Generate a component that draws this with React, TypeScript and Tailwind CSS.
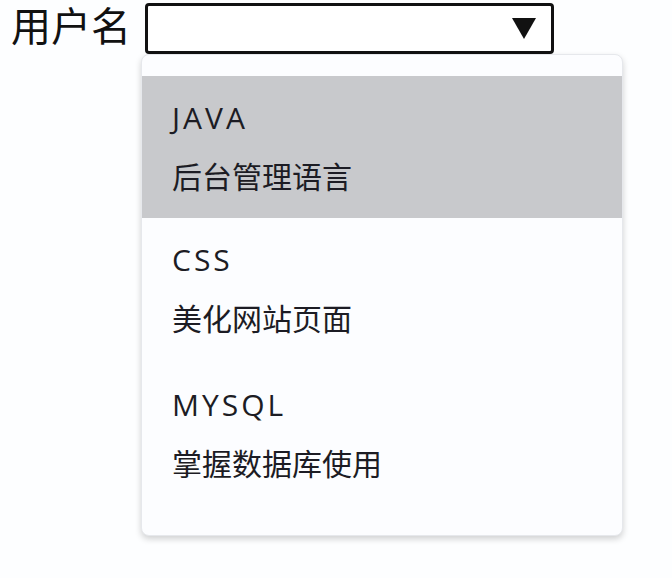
import { useState } from "react";

interface Option {
  title: string;
  desc: string;
}

const options: Option[] = [
  { title: "JAVA", desc: "后台管理语言" },
  { title: "CSS", desc: "美化网站页面" },
  { title: "MYSQL", desc: "掌握数据库使用" },
];

const font = { fontFamily: '"Open Sans", "Noto Sans CJK SC", sans-serif' };

export default function App() {
  const [active, setActive] = useState(0);

  return (
    <main className="min-h-[578px] w-[672px] bg-[#fdfeff] text-[#1c1c24]" style={font}>
      {/* 选择框 */}
      <div className="flex items-start pl-[11px]">
        <label className="w-[134px] shrink-0 text-[40px] leading-[52px] text-[#111]">用户名</label>
        <div className="mt-[3px] flex h-[51px] w-[409px] items-center justify-end rounded-[4px] border-[3px] border-[#111] bg-white pr-[15px]">
          <svg width="24" height="21" viewBox="0 0 24 21">
            <polygon points="0,0 24,0 12,21" fill="#111" />
          </svg>
        </div>
      </div>

      {/* 下拉列表 */}
      <ul className="ml-[141px] w-[482px] rounded-[8px] border border-[#e6e8ec] bg-[#fcfdff] pt-[21px] pb-[27px] shadow-[0_3px_6px_rgba(0,0,0,0.18)]">
        {options.map((opt, i) => (
          <li
            key={opt.title}
            onMouseEnter={() => setActive(i)}
            className={`h-[145px] pl-[30px] pt-[24px] first:h-[142px] ${active === i ? "bg-[#c8c9cc]" : ""}`}
          >
            <div className="text-[30px] leading-[36px] tracking-[3px]">{opt.title}</div>
            <div className="mt-[23px] text-[30px] leading-[36px]">{opt.desc}</div>
          </li>
        ))}
      </ul>
    </main>
  );
}
